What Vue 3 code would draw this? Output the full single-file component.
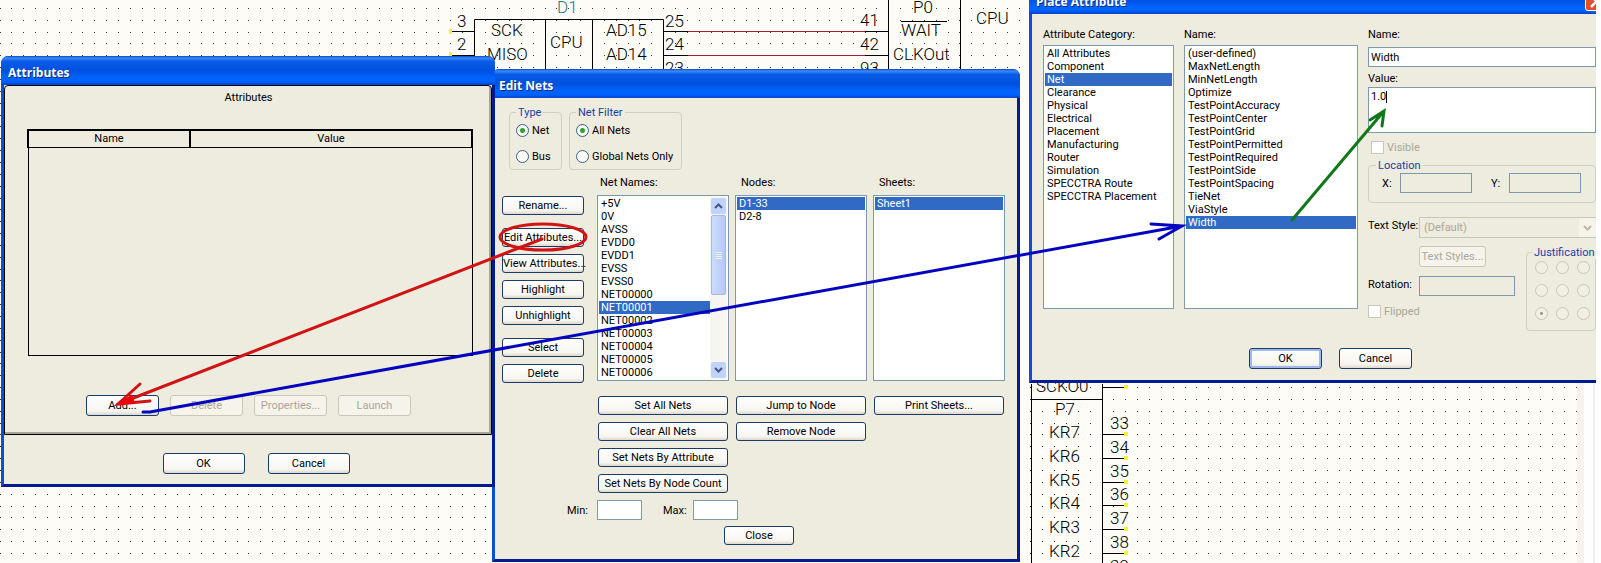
<script setup>
import { ref } from 'vue'

const STEP = 11.85
const dots = (() => {
  let d = ''
  for (let r = 0; r < 47; r++) {
    for (let c = 0; c < 134; c++) {
      const x = Math.floor(c * STEP)
      const y = Math.floor(8.4 + r * STEP)
      if (x < 1578) d += `M${x} ${y}h1v1h-1z`
    }
  }
  return d
})()

const pins = [
  { n: '33', name: 'KR7', y: 434 },
  { n: '34', name: 'KR6', y: 458 },
  { n: '35', name: 'KR5', y: 482 },
  { n: '36', name: 'KR4', y: 505 },
  { n: '37', name: 'KR3', y: 529 },
  { n: '38', name: 'KR2', y: 553 },
]

const netNames = ['+5V', '0V', 'AVSS', 'EVDD0', 'EVDD1', 'EVSS', 'EVSS0', 'NET00000', 'NET00001', 'NET00002', 'NET00003', 'NET00004', 'NET00005', 'NET00006']
const nodes = ['D1-33', 'D2-8']
const sheets = ['Sheet1']
const categories = ['All Attributes', 'Component', 'Net', 'Clearance', 'Physical', 'Electrical', 'Placement', 'Manufacturing', 'Router', 'Simulation', 'SPECCTRA Route', 'SPECCTRA Placement']
const names = ['(user-defined)', 'MaxNetLength', 'MinNetLength', 'Optimize', 'TestPointAccuracy', 'TestPointCenter', 'TestPointGrid', 'TestPointPermitted', 'TestPointRequired', 'TestPointSide', 'TestPointSpacing', 'TieNet', 'ViaStyle', 'Width']

const net = ref('NET00001')
const node = ref('D1-33')
const sheet = ref('Sheet1')
const category = ref('Net')
const attribute = ref('Width')
const value = ref('1.0')
const type = ref('net')
const filter = ref('all')
</script>

<template>
  <main class="desk">
    <svg class="schematic" width="1601" height="563" aria-hidden="true">
      <rect x="1577" width="7" height="563" fill="#f7f3ec" />
      <rect x="1584" width="17" height="563" fill="#fefefe" />
      <rect x="1593" width="2" height="563" fill="#eeeeee" />
      <path :d="dots" fill="#333" />
      <g class="wire">
        <path d="M474.500 69V19.500H663.500V69M545.500 19.500V69M592.500 19.500V69M450 31.500H474M450 55.500H474" />
        <path d="M664 31.500H688M664 55.500H688M865 31.500H888M865 55.500H888M888.500 0V69M960.500 0V69M901 21.500H947" />
        <path class="red" d="M688 31.500H865M688 55.500H865" />
        <path d="M1031.500 384V563M1102.500 384V563M1031 399.500H1102M1103 387.500H1126" />
        <path v-for="p in pins" :key="p.n" :d="`M1103 ${p.y}.5H1126`" />
      </g>
      <g class="node">
        <path d="M449 29h3v5h-3zM449 52h3v4h-3zM1124 385h4v4h-4z" />
        <path v-for="p in pins" :key="p.n" :d="`M1124 ${p.y - 2}h4v4h-4z`" />
      </g>
      <g class="part">
        <text x="557" y="13" class="teal">D1</text>
        <text x="457" y="27">3</text>
        <text x="457" y="50">2</text>
        <text x="491" y="36">SCK</text>
        <text x="487" y="60">MISO</text>
        <text x="550" y="48">CPU</text>
        <text x="606" y="36">AD15</text>
        <text x="606" y="60">AD14</text>
        <text x="665" y="27">25</text>
        <text x="665" y="50">24</text>
        <text x="665" y="74">23</text>
        <text x="860" y="26">41</text>
        <text x="860" y="50">42</text>
        <text x="860" y="74">93</text>
        <text x="913" y="13">P0</text>
        <text x="901" y="36">WAIT</text>
        <text x="893" y="60">CLKOut</text>
        <text x="976" y="24">CPU</text>
        <text x="1036" y="392">SCKO0</text>
        <text x="1055" y="415">P7</text>
        <template v-for="p in pins" :key="p.n">
          <text x="1049" :y="p.y + 4">{{ p.name }}</text>
          <text x="1110" :y="p.y - 5">{{ p.n }}</text>
        </template>
        <text x="1110" y="572">39</text>
      </g>
    </svg>

    <section class="win nets" aria-label="Edit Nets">
      <header class="title">Edit Nets</header>
      <div class="body">
        <div class="groups">
          <fieldset>
            <legend>Type</legend>
            <label><input v-model="type" type="radio" name="type" value="net" />Net</label>
            <label><input v-model="type" type="radio" name="type" value="bus" />Bus</label>
          </fieldset>
          <fieldset class="filter">
            <legend>Net Filter</legend>
            <label><input v-model="filter" type="radio" name="filter" value="all" />All Nets</label>
            <label><input v-model="filter" type="radio" name="filter" value="global" />Global Nets Only</label>
          </fieldset>
        </div>
        <div class="cols">
          <div class="side">
            <button>Rename...</button>
            <button class="more">Edit Attributes...</button>
            <button>View Attributes...</button>
            <button>Highlight</button>
            <button>Unhighlight</button>
            <button class="more">Select</button>
            <button>Delete</button>
          </div>
          <div class="col">
            <span id="l-net" class="cap">Net Names:</span>
            <div class="list scroll">
              <ul role="listbox" aria-labelledby="l-net">
                <li v-for="n in netNames" :key="n" role="option" :aria-selected="n === net" @click="net = n">{{ n }}</li>
              </ul>
              <div class="bar" aria-hidden="true">
                <span class="arrow"><svg width="9" height="6"><path d="M1 5l3.500-3.500L8 5" /></svg></span>
                <span class="thumb"><i></i><i></i><i></i><i></i></span>
                <span class="track"></span>
                <span class="arrow"><svg width="9" height="6"><path d="M1 1l3.500 3.500L8 1" /></svg></span>
              </div>
            </div>
            <div class="acts">
              <button>Set All Nets</button>
              <button>Clear All Nets</button>
              <button>Set Nets By Attribute</button>
              <button>Set Nets By Node Count</button>
            </div>
          </div>
          <div class="col">
            <span id="l-node" class="cap inset">Nodes:</span>
            <ul class="list" role="listbox" aria-labelledby="l-node">
              <li v-for="n in nodes" :key="n" role="option" :aria-selected="n === node" @click="node = n">{{ n }}</li>
            </ul>
            <div class="acts">
              <button>Jump to Node</button>
              <button>Remove Node</button>
            </div>
          </div>
          <div class="col">
            <span id="l-sheet" class="cap inset">Sheets:</span>
            <ul class="list" role="listbox" aria-labelledby="l-sheet">
              <li v-for="n in sheets" :key="n" role="option" :aria-selected="n === sheet" @click="sheet = n">{{ n }}</li>
            </ul>
            <div class="acts">
              <button>Print Sheets...</button>
            </div>
          </div>
        </div>
        <div class="range">
          <label for="min">Min:</label><input id="min" type="text" />
          <label for="max">Max:</label><input id="max" type="text" />
        </div>
        <div class="close"><button>Close</button></div>
      </div>
    </section>

    <section class="win attrs" aria-label="Attributes">
      <header class="title">Attributes</header>
      <div class="body">
        <div class="page">
          <table>
            <caption>Attributes</caption>
            <thead>
              <tr><th>Name</th><th>Value</th></tr>
            </thead>
            <tbody>
              <tr><td colspan="2"></td></tr>
            </tbody>
          </table>
          <div class="row">
            <button>Add...</button>
            <button disabled>Delete</button>
            <button disabled>Properties...</button>
            <button disabled>Launch</button>
          </div>
        </div>
        <div class="foot">
          <button>OK</button>
          <button>Cancel</button>
        </div>
      </div>
    </section>

    <section class="win place" aria-label="Place Attribute">
      <header class="title">
        Place Attribute
        <button class="x" aria-label="Close window">
          <svg width="21" height="21" viewBox="0 0 21 21"><path d="M5 5l11 11M16 5L5 16" stroke="#fff" stroke-width="2.500" /></svg>
        </button>
      </header>
      <div class="body">
        <div class="panes">
          <div class="pane">
            <span id="l-cat" class="cap">Attribute Category:</span>
            <ul class="list" role="listbox" aria-labelledby="l-cat">
              <li v-for="n in categories" :key="n" role="option" :aria-selected="n === category" @click="category = n">{{ n }}</li>
            </ul>
          </div>
          <div class="pane">
            <span id="l-name" class="cap">Name:</span>
            <ul class="list" role="listbox" aria-labelledby="l-name">
              <li v-for="n in names" :key="n" role="option" :aria-selected="n === attribute" @click="attribute = n">{{ n }}</li>
            </ul>
          </div>
          <div class="form">
            <label for="name" class="cap">Name:</label>
            <input id="name" v-model="attribute" type="text" class="name" />
            <label for="value" class="cap">Value:</label>
            <div class="area">
              <textarea id="value" v-model="value"></textarea>
              <i class="caret"></i>
            </div>
            <label class="check visible"><input type="checkbox" disabled />Visible</label>
            <fieldset class="loc">
              <legend>Location</legend>
              <label for="x">X:</label><input id="x" type="text" disabled />
              <label for="y">Y:</label><input id="y" type="text" disabled />
            </fieldset>
            <div class="field style">
              <label for="style">Text Style:</label>
              <div class="drop">
                <select id="style" disabled><option>(Default)</option></select>
                <span class="btn"><svg width="9" height="6"><path d="M1 1l3.500 3.500L8 1" /></svg></span>
              </div>
            </div>
            <div class="lower">
              <div class="left">
                <button class="styles" disabled>Text Styles...</button>
                <div class="field">
                  <label for="rot">Rotation:</label><input id="rot" type="text" disabled />
                </div>
                <label class="check"><input type="checkbox" disabled />Flipped</label>
              </div>
              <fieldset class="just">
                <legend>Justification</legend>
                <input v-for="i in 9" :key="i" type="radio" name="just" :checked="i === 7" :aria-label="`Position ${i}`" disabled />
              </fieldset>
            </div>
          </div>
        </div>
        <div class="ok">
          <button class="default">OK</button>
          <button>Cancel</button>
        </div>
      </div>
    </section>

    <svg class="notes" width="1601" height="563" aria-hidden="true">
      <g stroke="#d01414">
        <ellipse cx="543" cy="237" rx="43" ry="13" />
        <path d="M542 239L118 404M140 384L118 404L150 401" />
        <path d="M118 404l14-9 2 7z" fill="#f00000" stroke="#f00000" stroke-width="1" />
      </g>
      <path stroke="#0404c0" d="M143 412H150L1182 226M1151 224L1182 226L1159 239" />
      <path stroke="#107818" d="M1292 220L1384 111M1370 120L1384 111L1382 126" />
    </svg>
  </main>
</template>

<style>
body {
  margin: 0;
}
</style>

<style scoped>
.desk {
  position: relative;
  min-height: 100vh;
  overflow: hidden;
  background: #fdfcf7;
  font: 11px/13px Roboto, "Liberation Sans", sans-serif;
  color: #000;
}
.desk * {
  box-sizing: border-box;
}
.schematic,
.notes {
  position: absolute;
  top: 0;
  left: 0;
}
.notes {
  pointer-events: none;
  fill: none;
  stroke-width: 3;
  stroke-linecap: round;
}
.wire {
  fill: none;
  stroke: #000;
}
.wire .red {
  stroke: #b01c2c;
}
.node {
  fill: #f6ee3c;
}
.part {
  font: 300 17px Roboto, "Liberation Sans", sans-serif;
}
.part .teal {
  fill: #1c7880;
}
.win {
  position: absolute;
  border: 3px solid #0a3fc4;
  border-color: #0a3fc4 #001c90 #001c90 #0a50d0;
  border-top: 0;
  border-radius: 8px 8px 0 0;
  background: #eeebdf;
}
.title {
  position: relative;
  display: flex;
  align-items: center;
  height: 29px;
  margin: 0 -3px;
  padding: 4px 7px 0;
  border-radius: 7px 7px 0 0;
  background: linear-gradient(#0a44c4, #3a8cf8 7%, #0a5ce8 18%, #0050e0 50%, #0064fc 75%, #0060fc 90%, #0040c0);
  color: #fff;
  font: bold 12px/16px "Open Sans", "Noto Sans", sans-serif;
  text-shadow: 1px 1px #0a2a80;
}
button {
  height: 19px;
  padding: 0;
  border: 1px solid #1c3c68;
  border-radius: 3px;
  background: linear-gradient(#fff, #f6f5f0 80%, #dcd8cc);
  font: inherit;
  color: #000;
  white-space: nowrap;
}
button:disabled {
  border-color: #cac7b8;
  background: #f5f3ea;
  color: #aaa798;
}
.default {
  box-shadow: inset 0 0 0 2px #a0b8ec;
}
ul {
  margin: 0;
  padding: 0;
  list-style: none;
}
.list {
  padding: 1px;
  border: 1px solid #8098ae;
  background: #fff;
}
li {
  height: 13px;
  padding-left: 2px;
  white-space: nowrap;
}
li[aria-selected="true"] {
  background: #316ac5;
  color: #fff;
}
.cap {
  display: block;
  height: 13px;
}
input[type="text"],
textarea {
  height: 20px;
  padding: 0 2px;
  border: 1px solid #8098ae;
  border-radius: 0;
  background: #fff;
  font: inherit;
  color: #000;
}
input[type="text"]:disabled {
  background: #eeebdf;
}
input[type="radio"] {
  appearance: none;
  width: 13px;
  height: 13px;
  margin: 0;
  border: 1px solid #3c6088;
  border-radius: 50%;
  background: #fbfbf8;
}
input[type="radio"]:checked {
  background: radial-gradient(circle, #30a030 0 2px, #f8f8f4 3px);
}
input[type="radio"]:disabled {
  border-color: #cac7b8;
  background: #f1eee3;
}
input[type="radio"]:disabled:checked {
  background: radial-gradient(circle, #9c998a 0 1px, #f1eee3 2px);
}
input[type="checkbox"] {
  appearance: none;
  width: 13px;
  height: 13px;
  margin: 0;
  border: 1px solid #cac7b8;
  background: #fff;
}
fieldset {
  display: flex;
  min-width: 0;
  margin: 0;
  border: 1px solid #d2cfc0;
  border-radius: 4px;
}
legend {
  height: 13px;
  padding: 0 2px;
  color: #1a3ea4;
}

/* Edit Nets */
.nets {
  top: 69px;
  left: 492px;
  width: 528px;
}
.nets .body {
  padding: 8px 0 14px;
}
.groups {
  display: flex;
  gap: 7px;
  padding-left: 14px;
}
.groups fieldset {
  flex-direction: column;
  gap: 13px;
  width: 53px;
  padding: 5px 6px 6px;
}
.groups .filter {
  width: 113px;
}
.groups label {
  display: flex;
  gap: 3px;
  white-space: nowrap;
}
.cols {
  display: grid;
  grid-template-columns: 82px 132px 132px 132px;
  gap: 6px;
  margin-top: 6px;
  padding-left: 7px;
}
.side {
  display: flex;
  flex-direction: column;
  gap: 7px;
  padding-top: 20px;
}
.side .more {
  margin-top: 6px;
}
.col {
  margin: 0 -7px 0 7px;
}
.col .cap {
  padding-left: 3px;
}
.col .inset {
  padding-left: 6px;
}
.col .list {
  height: 186px;
  margin-top: 6px;
}
.scroll {
  display: flex;
}
.scroll ul {
  flex: 1;
  min-width: 0;
}
.bar {
  display: flex;
  flex-direction: column;
  width: 17px;
  padding: 1px;
  background: #f6f5f0;
}
.arrow {
  display: grid;
  place-items: center;
  height: 16px;
  border-radius: 2px;
  background: #c2d3fb;
}
.arrow path {
  fill: none;
  stroke: #405880;
  stroke-width: 2;
}
.thumb {
  display: flex;
  flex-direction: column;
  align-items: center;
  justify-content: center;
  gap: 1px;
  height: 80px;
  margin-top: 1px;
  border: 1px solid #a4b8e8;
  border-radius: 2px;
  background: linear-gradient(90deg, #cddcfd, #b6c9f6);
}
.thumb i {
  width: 6px;
  height: 1px;
  background: #eef4fe;
}
.track {
  flex: 1;
}
.acts {
  display: flex;
  flex-direction: column;
  gap: 7px;
  margin-top: 15px;
  padding: 0 1px;
}
.range {
  display: flex;
  align-items: center;
  margin-top: 7px;
  padding-left: 72px;
}
.range label {
  width: 30px;
}
.range input {
  width: 45px;
}
.range input + label {
  margin-left: 21px;
}
.close {
  display: flex;
  justify-content: center;
  margin-top: 6px;
  padding-left: 6px;
}
.close button {
  width: 70px;
}

/* Attributes */
.attrs {
  top: 56px;
  left: 1px;
  width: 494px;
}
.page {
  padding: 5px 18px 18px 22px;
  border: 1px solid #000;
  border-radius: 4px 4px 0 0;
  box-shadow: inset -2px -2px #a8a596;
}
table {
  width: 100%;
  border-collapse: collapse;
  table-layout: fixed;
}
caption {
  height: 38px;
  padding-right: 3px;
}
th {
  height: 17px;
  padding: 0;
  border: 2px solid #000;
  border-bottom-width: 1px;
  font-weight: normal;
}
th:first-child {
  width: 162px;
}
td {
  height: 208px;
  border: 1px solid #000;
}
.row {
  display: flex;
  justify-content: center;
  gap: 11px;
  margin-top: 39px;
  padding-right: 3px;
}
.row button {
  width: 73px;
  height: 21px;
}
.foot {
  display: flex;
  justify-content: center;
  gap: 23px;
  padding: 18px 0 10px 16px;
}
.foot button {
  width: 82px;
  height: 21px;
}

/* Place Attribute */
.place {
  top: -15px;
  left: 1029px;
  right: 5px;
  border-right: 0;
}
.place .title {
  margin-right: 0;
  overflow: hidden;
}
.x {
  position: absolute;
  top: 5px;
  left: 556px;
  width: 21px;
  height: 21px;
  border-color: #fff;
  background: #e0502c;
}
.place .body {
  padding: 14px 0 11px 11px;
}
.panes {
  display: grid;
  grid-template-columns: 131px 174px 1fr;
  gap: 10px;
}
.pane .list {
  height: 264px;
  margin-top: 4px;
}
.form {
  display: flex;
  flex-direction: column;
  min-width: 0;
}
.name {
  margin: 6px 0 5px;
}
.area {
  position: relative;
  display: flex;
  margin: 2px 0 8px;
}
.area textarea {
  width: 100%;
  height: 46px;
  padding: 2px;
  resize: none;
}
.caret {
  position: absolute;
  top: 4px;
  left: 18px;
  width: 1px;
  height: 12px;
  background: #000;
}
.check {
  display: flex;
  gap: 3px;
  color: #aaa798;
}
.visible {
  padding-left: 3px;
}
.loc {
  align-items: center;
  height: 44px;
  margin-top: 5px;
  padding: 1px 13px 0;
}
.loc legend,
.just legend {
  margin-left: -6px;
}
.loc label {
  width: 18px;
}
.loc input {
  flex: 1;
  min-width: 0;
  max-width: 72px;
}
.loc input + label {
  margin-left: 19px;
}
.field {
  display: flex;
  align-items: center;
}
.field label {
  width: 51px;
  padding-bottom: 4px;
  white-space: nowrap;
}
.field input {
  width: 96px;
}
.style {
  margin-top: 14px;
}
.drop {
  position: relative;
  flex: 1;
}
select {
  appearance: none;
  display: block;
  width: 100%;
  height: 21px;
  padding: 0 4px;
  border: 1px solid #cac7b8;
  border-right: 0;
  border-radius: 0;
  background: #eeebdf;
  font: inherit;
  color: #aaa798;
  opacity: 1;
}
.btn {
  position: absolute;
  top: 1px;
  right: 0;
  display: grid;
  place-items: center;
  width: 17px;
  height: 19px;
  background: #f5f3ea;
}
.btn path {
  fill: none;
  stroke: #bbb8aa;
  stroke-width: 2;
}
.lower {
  display: grid;
  grid-template-columns: 158px 1fr;
  margin-top: 8px;
}
.left {
  display: flex;
  flex-direction: column;
  gap: 9px;
}
.styles {
  width: 67px;
  height: 21px;
  margin-left: 51px;
}
.just {
  display: grid;
  grid-template-columns: repeat(3, 13px);
  align-content: start;
  gap: 10px 8px;
  height: 85px;
  padding: 2px 0 0 8px;
}
.just legend {
  margin-left: -3px;
}
.ok {
  display: flex;
  gap: 17px;
  margin-top: 17px;
  padding-left: 206px;
}
.ok button {
  width: 73px;
  height: 21px;
}
</style>
